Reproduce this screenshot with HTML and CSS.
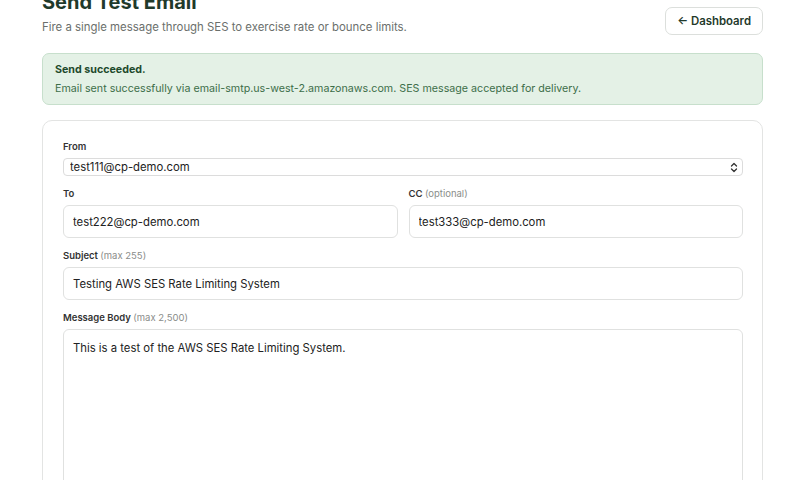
FILE: index.html
```html
<!DOCTYPE html>
<html lang="en">
<head>
    <meta charset="UTF-8">
    <meta name="viewport" content="width=device-width, initial-scale=1.0">
    <title>Send Test Email</title>
    <link rel="stylesheet" href="styles.css">
</head>
<body>
    <div class="page">
        <div class="page-header">
            <div>
                <h1>Send Test Email</h1>
                <p class="subtitle">Fire a single message through SES to exercise rate or bounce limits.</p>
            </div>
            <a class="back-btn" href="#">&larr; Dashboard</a>
        </div>

        <div class="alert">
            <div class="alert-title">Send succeeded.</div>
            <div class="alert-text">Email sent successfully via email-smtp.us-west-2.amazonaws.com. SES message accepted for delivery.</div>
        </div>

        <form class="card">
            <div class="field">
                <label>From</label>
                <div class="select-wrap">
                    <select class="select">
                        <option>test111@cp-demo.com</option>
                    </select>
                    <svg class="chevrons" width="8" height="11" viewBox="0 0 8 11" fill="none" stroke="#333" stroke-width="1.3" stroke-linecap="round" stroke-linejoin="round">
                        <path d="M1.5 4 L4 1.5 L6.5 4"/>
                        <path d="M1.5 7 L4 9.5 L6.5 7"/>
                    </svg>
                </div>
            </div>

            <div class="field-row">
                <div class="field">
                    <label>To</label>
                    <input class="input" type="text" value="test222@cp-demo.com">
                </div>
                <div class="field">
                    <label>CC <span class="hint">(optional)</span></label>
                    <input class="input" type="text" value="test333@cp-demo.com">
                </div>
            </div>

            <div class="field">
                <label>Subject <span class="hint">(max 255)</span></label>
                <input class="input" type="text" value="Testing AWS SES Rate Limiting System">
            </div>

            <div class="field">
                <label>Message Body <span class="hint">(max 2,500)</span></label>
                <textarea class="textarea">This is a test of the AWS SES Rate Limiting System.</textarea>
            </div>
        </form>
    </div>
</body>
</html>
```

FILE: styles.css
```css
body {
    margin: 0;
    font-family: Inter, "Noto Sans", sans-serif;
    background-color: #ffffff;
    color: #222;
    overflow: hidden;
}

.page {
    width: 721px;
    margin-left: 42px;
    margin-top: -14px;
}

.page-header {
    display: flex;
    justify-content: space-between;
    align-items: flex-start;
}

h1 {
    margin: 2px 0 0;
    font-size: 20px;
    line-height: 28px;
    font-weight: 700;
    color: #1f3a2b;
}

.subtitle {
    margin: 2px 0 0;
    font-size: 11.4px;
    line-height: 18px;
    color: #6b6f6c;
}

.back-btn {
    margin-top: 21px;
    height: 28px;
    box-sizing: border-box;
    padding: 0 11px;
    display: flex;
    align-items: center;
    border: 1px solid #dcdfdc;
    border-radius: 7px;
    font-size: 11.4px;
    font-weight: 600;
    color: #1f3a2b;
    text-decoration: none;
}

.alert {
    margin-top: 17px;
    padding: 8px 12px 7px;
    background-color: #e4f1e6;
    border: 1px solid #c7dfcc;
    border-radius: 7px;
}

.alert-title {
    font-size: 10.7px;
    line-height: 16px;
    font-weight: 700;
    color: #1e4a2c;
}

.alert-text {
    margin-top: 3px;
    font-size: 10.7px;
    line-height: 16px;
    color: #3d6e49;
}

.card {
    margin-top: 15px;
    padding: 19px 19px 20px 20px;
    border: 1px solid #e3e4e3;
    border-radius: 10px;
    display: flex;
    flex-direction: column;
    gap: 11px;
}

.field {
    display: flex;
    flex-direction: column;
    gap: 4px;
    flex: 1;
}

.field-row {
    display: flex;
    gap: 11px;
}

label {
    font-size: 9.5px;
    line-height: 14px;
    font-weight: 600;
    color: #333;
}

.hint {
    font-weight: 400;
    color: #8a8d8a;
}

.select-wrap {
    position: relative;
}

.select {
    appearance: none;
    display: block;
    width: 100%;
    height: 18px;
    padding: 0 6px;
    border: 1px solid #dcdcdc;
    border-radius: 4px;
    background: #fff;
    font-family: inherit;
    font-size: 11.3px;
    color: #222;
}

.chevrons {
    position: absolute;
    right: 5px;
    top: 4px;
}

.input,
.textarea {
    display: block;
    box-sizing: border-box;
    width: 100%;
    border: 1px solid #e0e1e0;
    border-radius: 6px;
    background: #fff;
    font-family: inherit;
    font-size: 11.3px;
    color: #222;
    outline: none;
}

.input {
    height: 33px;
    padding: 0 9px;
}

.textarea {
    height: 220px;
    padding: 10px 9px;
    line-height: 16px;
    resize: none;
}
```
